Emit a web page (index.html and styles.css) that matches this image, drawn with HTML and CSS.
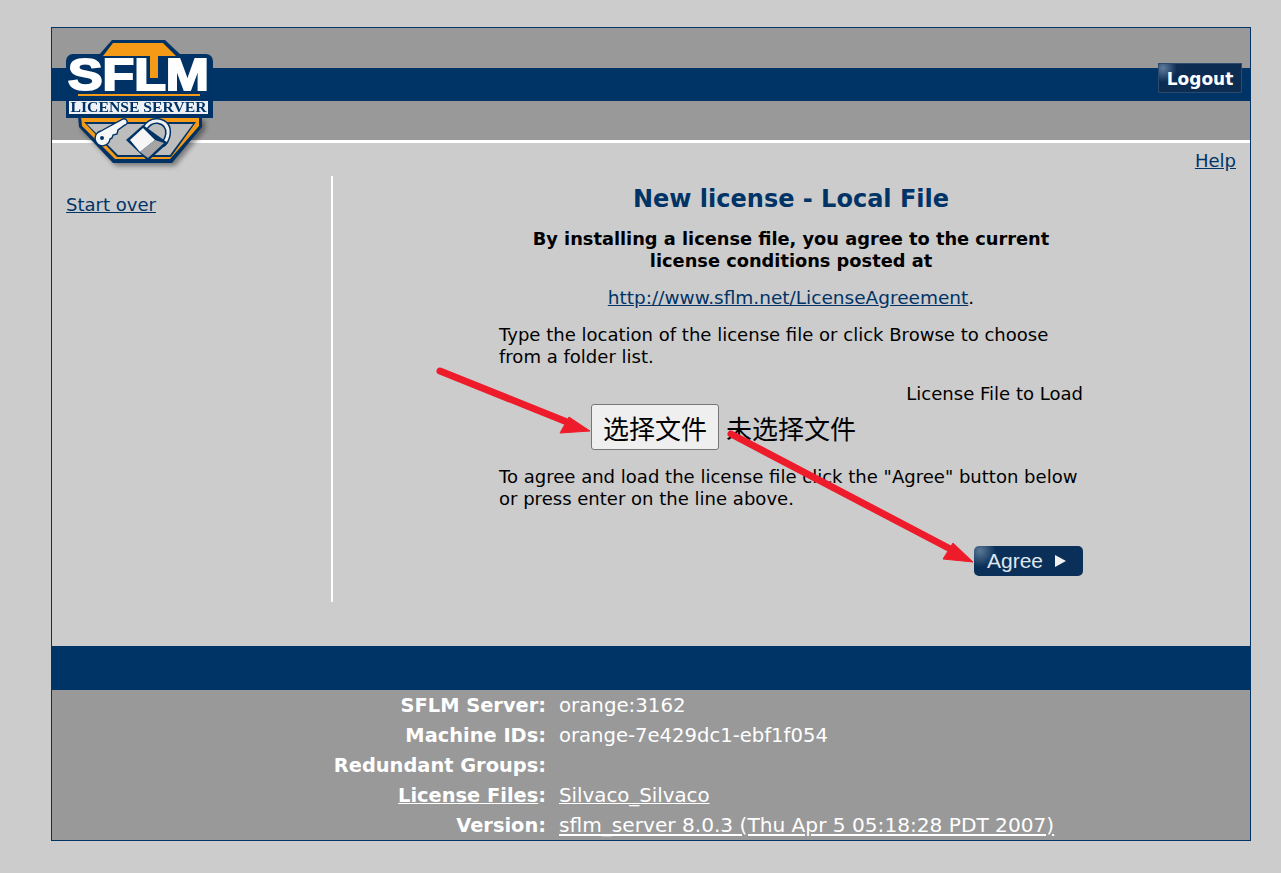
FILE: index.html
```html
<!DOCTYPE html>
<html lang="en">
<head>
<meta charset="utf-8">
<title>SFLM License Server</title>
<link rel="stylesheet" href="styles.css">
</head>
<body>
<div class="frame">
  <header class="header">
    <div class="band">
      <a class="logout" href="#">Logout</a>
    </div>
  </header>
  <svg class="logo" width="160" height="140" viewBox="0 0 160 140">
    <defs>
      <filter id="shadow" x="-10%" y="-10%" width="120%" height="125%"><feGaussianBlur stdDeviation="2.5"/></filter>
      <filter id="soft" x="-5%" y="-5%" width="110%" height="110%"><feGaussianBlur stdDeviation="0.45"/></filter>
    </defs>
    <path d="M12 78 H136 V88 L106 124 H47 L13 88 Z" fill="#000" opacity=".4" filter="url(#shadow)" transform="translate(3,3)"/>
    <g filter="url(#soft)">
      <path d="M46 1 H99 L116 17 H32 Z" fill="#003366"/>
      <rect x="0" y="15" width="147" height="42" rx="7" fill="#003366"/>
      <path d="M37 17 L47 4 H97 L110 17 Z" fill="#f49a14"/>
      <rect x="84" y="15" width="8" height="24" fill="#f49a14"/>
      <rect x="12" y="55" width="122" height="2" fill="#f49a14"/>
      <text class="logo-title" x="72.5" y="51" text-anchor="middle" textLength="141" lengthAdjust="spacingAndGlyphs">SFLM</text>
      <path d="M12 77 H136 V88 L106 124 H47 L13 88 Z" fill="#003366"/>
      <path d="M15 77 H133 V87 L104 120 H49 L16 87 Z" fill="#f49a14"/>
      <path d="M18 83 H130 L105 118 H51 Z" fill="#003366"/>
      <path d="M21 85 H127 L104 116 H52 Z" fill="#bdbdbd"/>
      <rect x="0" y="59" width="147" height="20" fill="#003366"/>
      <rect x="3" y="62" width="139" height="13" fill="#eef1f5"/>
      <text class="logo-sub" x="72.5" y="73" text-anchor="middle" textLength="136" lengthAdjust="spacingAndGlyphs">LICENSE SERVER</text>
      <path d="M35 92 L57 80 A3 3 0 0 1 59 86 L52 91 L51 95 L47 96 L46 99 L44 100 A7.5 7.5 0 1 1 35 92 Z" fill="#f4f6f8" stroke="#003366" stroke-width="1.4"/>
      <circle cx="36" cy="99" r="2" fill="#003366"/>
      <path d="M79 89 Q84 81 92 82 Q103 84 102 95 Q101 102 96 106" fill="none" stroke="#003366" stroke-width="6"/>
      <path d="M79 89 Q84 81 92 82 Q103 84 102 95 Q101 102 96 106" fill="none" stroke="#eef1f5" stroke-width="3"/>
      <path d="M60 101 L77 86 L102 104 L82 122 Z" fill="#003366"/>
      <path d="M64 101 L77 89 L89 101 L74 113 Z" fill="#f6f6f6"/>
      <path d="M74 113 L89 101 L98 104 L82 119 Z" fill="#a5a5a5"/>
    </g>
  </svg>

  <div class="help-row"><a href="#">Help</a></div>

  <main class="main">
    <nav class="side"><a href="#">Start over</a></nav>
    <section class="content">
      <div class="panel">
        <h1>New license - Local File</h1>
        <p class="terms">By installing a license file, you agree to the current<br>license conditions posted at</p>
        <p class="url"><a href="#">http://www.sflm.net/LicenseAgreement</a>.</p>
        <p class="para">Type the location of the license file or click Browse to choose<br>from a folder list.</p>
        <p class="label">License File to Load</p>
        <div class="file-row"><button class="file-btn" type="button">选择文件</button><span class="file-none">未选择文件</span></div>
        <p class="para">To agree and load the license file click the "Agree" button below<br>or press enter on the line above.</p>
        <div class="agree-row"><a class="agree" href="#">Agree <span class="tri"></span></a></div>
      </div>
    </section>
  </main>

  <div class="footband"></div>
  <footer class="footer">
    <dl class="info">
      <dt>SFLM Server:</dt><dd>orange:3162</dd>
      <dt>Machine IDs:</dt><dd class="machine">orange-7e429dc1-ebf1f054</dd>
      <dt>Redundant Groups:</dt><dd></dd>
      <dt><a href="#">License Files</a>:</dt><dd><a href="#">Silvaco_Silvaco</a></dd>
      <dt>Version:</dt><dd class="version"><a href="#">sflm_server 8.0.3 (Thu Apr 5 05:18:28 PDT 2007)</a></dd>
    </dl>
  </footer>

  <svg class="arrows" width="1281" height="873" viewBox="0 0 1281 873">
    <g stroke="#ee1c2b" stroke-width="7" stroke-linecap="round" fill="none">
      <path d="M440 371 L572 424"/>
      <path d="M731 434 L958 553"/>
    </g>
    <path d="M590 431 L560 433 L569 417 Z" fill="#ee1c2b" stroke="#ee1c2b" stroke-width="1"/>
    <path d="M973 562 L943 559 L953 543 Z" fill="#ee1c2b" stroke="#ee1c2b" stroke-width="1"/>
  </svg>
</div>
</body>
</html>
```
FILE: styles.css
```css
* { box-sizing: border-box; }
html, body { margin: 0; height: 100%; }
body {
  background: #ccc;
  padding: 27px 0 0 51px;
  font-family: "DejaVu Sans", Verdana, sans-serif;
  font-size: 18.05px;
  line-height: 22px;
  color: #000;
  overflow: hidden;
}
a { color: #003366; }
.frame {
  position: relative;
  width: 1200px;
  height: 814px;
  border: 1px solid #003366;
  display: flex;
  flex-direction: column;
  background: #ccc;
}
.header {
  height: 115px;
  padding-top: 40px;
  background: #999;
  border-bottom: 3px solid #fff;
  flex: none;
}
.band {
  height: 33px;
  background: #003366;
  display: flex;
  justify-content: flex-end;
  padding-right: 8px;
}
.logout {
  height: 30px;
  width: 84px;
  margin-top: -5px;
  background: radial-gradient(circle at 4px 4px, #5f7c9d 0, #0d2c52 14px), linear-gradient(#0b2a50, #001c40);
  color: #fff;
  font-weight: bold;
  font-size: 17px;
  line-height: 30px;
  text-align: center;
  text-decoration: none;
  border: 1px solid #2b4a6d;
}
.logo { position: absolute; left: 14px; top: 11px; }
.logo-title { font-family: "Liberation Sans", Arial, sans-serif; font-weight: bold; font-size: 45px; fill: #fff; stroke: #fff; stroke-width: 2px; }
.logo-sub { font-family: "Liberation Serif", serif; font-weight: bold; font-size: 15px; fill: #003366; }
.help-row { height: 33px; padding: 7px 14px 0 0; text-align: right; flex: none; }
.main { display: grid; grid-template-columns: 281px 1fr; height: 426px; flex: none; }
.side { border-right: 2px solid #fff; padding: 18px 0 0 14px; }
.content { display: flex; justify-content: flex-start; padding-left: 166px; }
.panel { width: 584px; }
h1 { margin: 9px 0 0; color: #003366; font-size: 24px; line-height: 28px; font-weight: bold; text-align: center; }
.terms { margin: 15px 0 0; font-weight: bold; font-size: 17.8px; text-align: center; }
.url { margin: 15px 0 0; font-size: 18.5px; text-align: center; }
.para { margin: 15px 0 0; }
.label { margin: 15px 0 0; text-align: right; }
.file-row { display: flex; align-items: center; margin: -2px 0 17px 92px; height: 46px; padding-top: 1px; }
.file-btn {
  width: 128px;
  height: 46px;
  background: #efefef;
  border: 1px solid #767676;
  border-radius: 3px;
  font-family: "Noto Sans CJK SC", sans-serif;
  font-size: 26px;
  line-height: 26px;
  color: #000;
  padding: 2px 0 0;
}
.file-none { font-family: "Noto Sans CJK SC", sans-serif; font-size: 26px; margin: 2px 0 0 7px; }
.agree-row { display: flex; justify-content: flex-end; margin-top: 36px; }
.agree {
  width: 109px;
  height: 30px;
  border-radius: 5px;
  background: radial-gradient(circle at 6px 5px, #5a7896 0, #0a2f58 16px), linear-gradient(#0c355f, #00234a);
  color: #dfe6ee;
  font-family: "Liberation Sans", Arial, sans-serif;
  font-size: 21px;
  line-height: 30px;
  padding-left: 13px;
  text-decoration: none;
  display: flex;
  align-items: center;
  gap: 12px;
}
.tri { width: 0; height: 0; border-left: 11px solid #f2f2f2; border-top: 6px solid transparent; border-bottom: 6px solid transparent; }
.footband { height: 44px; background: #003366; margin-top: 44px; flex: none; }
.footer { flex: 1; background: #999; color: #fff; padding-top: 1px; overflow: hidden; }
.info { display: grid; grid-template-columns: 494px 1fr; margin: 0; line-height: 30px; column-gap: 13px; }
.info dt { text-align: right; font-weight: bold; font-size: 19.4px; }
.info dd { margin: 0; font-size: 19.8px; }
.info dd.machine { font-size: 19.6px; }
.info dd.version { font-size: 20.14px; line-height: 28px; }
.info a { color: #fff; }
.arrows { position: absolute; left: -52px; top: -28px; pointer-events: none; }
```
